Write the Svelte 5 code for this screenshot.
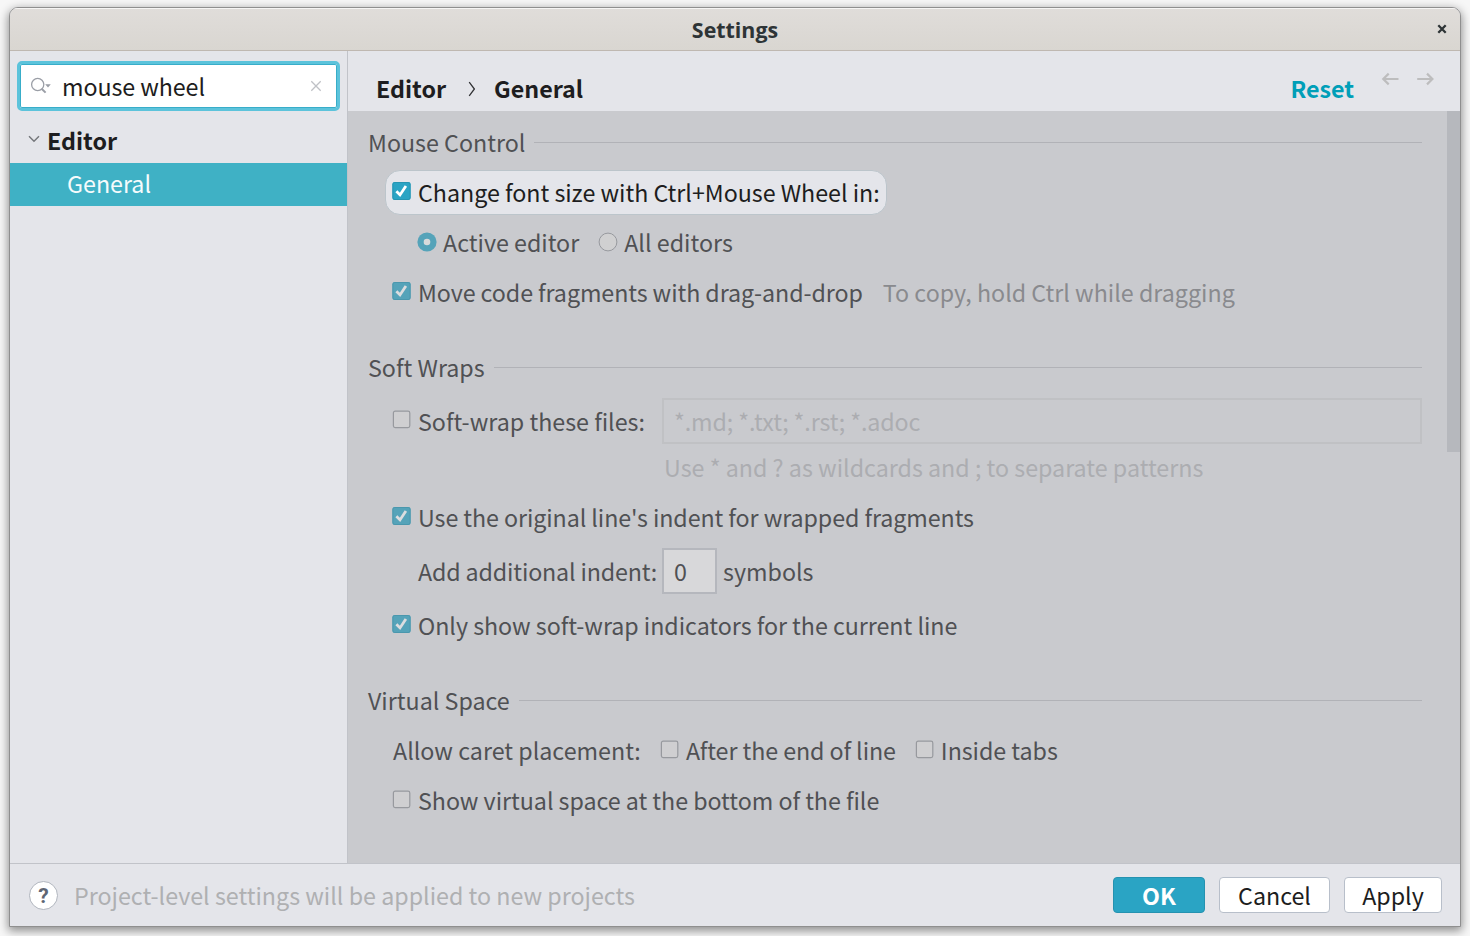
<script>
  let query = $state('mouse wheel');
  const softWrapFiles = '*.md; *.txt; *.rst; *.adoc';
</script>

{#snippet check(on, active = false)}
  <svg class="check" class:active width="20" height="20" viewBox="0 0 20 20">
    {#if on}
      <rect class="fill" x="1.4" y="1" width="18.2" height="18" rx="2.2" />
      <rect class="edge" x="1.9" y="1.5" width="17.2" height="17" rx="1.8" />
      <path class="tick" d="M5.4 10.2 9 13.9 14.9 5" />
    {:else}
      <rect class="empty" x="2.4" y="2.2" width="16.4" height="16.4" rx="1.8" />
    {/if}
  </svg>
{/snippet}

{#snippet radio(on)}
  <svg class="radio" width="20" height="20" viewBox="0 0 20 20">
    {#if on}
      <circle cx="10" cy="10" r="9.6" fill="#55a3b9" />
      <circle cx="10" cy="10" r="3.3" fill="#d9dadb" />
    {:else}
      <circle cx="10" cy="10" r="8.9" fill="#d0d0d1" stroke="#97999e" stroke-width="1" />
    {/if}
  </svg>
{/snippet}

<div class="desktop">
  <div class="window">
    <header class="titlebar">
      <span class="title">Settings</span>
      <svg class="close" width="10" height="10" viewBox="0 0 10 10">
        <path d="M1.3 1.3 8.7 8.7M8.7 1.3 1.3 8.7" />
      </svg>
    </header>

    <div class="body">
      <aside>
        <div class="search">
          <svg width="22" height="18" viewBox="0 0 22 18">
            <circle cx="7.7" cy="7.5" r="6.1" fill="none" stroke="#9a9ea6" stroke-width="1.3" />
            <path d="M11.6 11.7 15.6 15.6" stroke="#9a9ea6" stroke-width="2" />
            <path d="M15.2 7.3H20.8L18 10.4Z" fill="#9a9ea6" />
          </svg>
          <input bind:value={query} aria-label="Search" />
          <svg width="12" height="12" viewBox="0 0 12 12">
            <path d="M1.3 1.3 10.7 10.7M10.7 1.3 1.3 10.7" stroke="#bfc1c6" stroke-width="1.3" />
          </svg>
        </div>
        <div class="group">
          <svg width="12" height="8" viewBox="0 0 12 8">
            <path d="M1 1.2 6 6.2 11 1.2" fill="none" stroke="#76787c" stroke-width="1.5" />
          </svg>
          <b>Editor</b>
        </div>
        <div class="leaf">General</div>
      </aside>

      <main>
        <div class="crumbs">
          <b class="c1">Editor</b>
          <svg class="sep" width="8" height="16" viewBox="0 0 8 16">
            <path d="M1.2 1.2 6.4 8 1.2 14.8" fill="none" stroke="#303134" stroke-width="1.3" />
          </svg>
          <b class="c2">General</b>
          <b class="reset">Reset</b>
          <svg class="arrow" width="18" height="14" viewBox="0 0 18 14">
            <path d="M17.5 7H2.3M7.7 1.6 2.3 7 7.7 12.4" />
          </svg>
          <svg class="arrow" width="18" height="14" viewBox="0 0 18 14">
            <path d="M1.2 7H16.4M11 1.6 16.4 7 11 12.4" />
          </svg>
        </div>

        <div class="scroll">
          <div class="form">
            <div class="section"><span>Mouse Control</span><hr /></div>
            <div class="row">
              <div class="spot">{@render check(true, true)}<span>Change font size with Ctrl+Mouse Wheel in:</span></div>
            </div>
            <div class="row deep">
              {@render radio(true)}<span class="r1">Active editor</span>
              {@render radio(false)}<span class="r2">All editors</span>
            </div>
            <div class="row">
              {@render check(true)}<span class="lbl tight">Move code fragments with drag-and-drop</span>
              <span class="note">To copy, hold Ctrl while dragging</span>
            </div>

            <div class="section next"><span>Soft Wraps</span><hr /></div>
            <div class="row files">
              {@render check(false)}<span class="lbl fixed">Soft-wrap these files:</span>
              <div class="field"><span>{softWrapFiles}</span></div>
            </div>
            <div class="row hint"><span>Use * and ? as wildcards and ; to separate patterns</span></div>
            <div class="row">
              {@render check(true)}<span class="lbl tight">Use the original line's indent for wrapped fragments</span>
            </div>
            <div class="row indent">
              <span class="fixed">Add additional indent:</span>
              <div class="num"><span>0</span></div>
              <span class="unit">symbols</span>
            </div>
            <div class="row">
              {@render check(true)}<span class="lbl semi">Only show soft-wrap indicators for the current line</span>
            </div>

            <div class="section next"><span>Virtual Space</span><hr /></div>
            <div class="row">
              <span class="caret">Allow caret placement:</span>
              {@render check(false)}<span class="lbl end">After the end of line</span>
              {@render check(false)}<span class="lbl semi">Inside tabs</span>
            </div>
            <div class="row">
              {@render check(false)}<span class="lbl semi">Show virtual space at the bottom of the file</span>
            </div>
          </div>
          <div class="track"><div class="thumb"></div></div>
        </div>
      </main>
    </div>

    <footer>
      <div class="help">?</div>
      <span class="info">Project-level settings will be applied to new projects</span>
      <button class="ok"><span>OK</span></button>
      <button class="cancel"><span>Cancel</span></button>
      <button class="apply"><span>Apply</span></button>
    </footer>
  </div>
</div>

<style>
  :global(body) { margin: 0; overflow: hidden; }
  * { box-sizing: border-box; }
  svg { flex: none; display: block; }
  .desktop {
    width: 1470px; height: 936px; padding: 7px 9px 9px; background: #f7f7f7; overflow: hidden;
    font: 23.25px/30px "Noto Sans CJK SC", "Noto Sans CJK JP", sans-serif; color: #1d1d20; white-space: nowrap;
  }
  .window {
    width: 1452px; height: 920px; display: flex; flex-direction: column; overflow: hidden;
    border: 1px solid #8f8f8f; border-radius: 9px 9px 0 0; background: #e4e5ea;
    box-shadow: 0 3px 10px 1px rgba(0, 0, 0, .42);
  }
  .titlebar {
    height: 43px; flex: none; display: flex; align-items: center; justify-content: center; position: relative;
    background: linear-gradient(#e0ddda, #d9d6d1); border-bottom: 1px solid #bfb8b1; box-shadow: inset 0 1px #f6f5f4;
  }
  .title { font: 700 21.4px/30px "Open Sans", "Noto Sans", sans-serif; color: #2e3436; padding-top: 2px; }
  .close { position: absolute; right: 13px; top: 16px; }
  .close path { stroke: #2e3436; stroke-width: 2.3; }
  .body { height: 812px; flex: none; display: flex; }
  aside { width: 338px; flex: none; border-right: 1px solid #c1c3c9; }
  .search {
    margin: 10px 7px 9px 7px; width: 323px; height: 50px; border: 3px solid #5cc3db; border-radius: 5px;
    box-shadow: inset 0 0 0 1px #38adc9; background: #fff; display: flex; align-items: center; padding: 0 15px 0 10px;
  }
  .search input {
    border: 0; padding: 0; outline: 0; background: none; font: inherit; color: inherit; letter-spacing: -.08px;
    margin-left: 10px; flex: 1; min-width: 0; height: 34px;
  }
  .group { height: 43px; display: flex; align-items: center; padding-left: 18px; }
  .group svg { margin-top: -5px; }
  .group b { margin: -3px 0 0 7px; }
  .leaf { height: 43px; line-height: 40px; padding-left: 57px; background: #3fb1c5; color: #f5fbfc; }
  main { flex: 1; min-width: 0; display: flex; flex-direction: column; }
  .crumbs { height: 60px; flex: none; display: flex; padding: 22px 26px 0 28px; align-items: flex-start; }
  .sep { margin: 8px 18px 0 22px; }
  .reset { margin-left: auto; margin-right: 27px; color: #009fb8; }
  .arrow { margin-top: -1px; }
  .arrow + .arrow { margin-left: 17px; }
  .arrow path { fill: none; stroke: #bdbdbe; stroke-width: 2.2; }
  .scroll { flex: 1; display: flex; background: #c9cace; color: #505154; }
  .form { flex: 1; padding: 7px 25px 0 20px; }
  .form span { padding-bottom: 2px; }
  .track { width: 13px; }
  .thumb { height: 341px; background: #b6b8bd; }
  .section { height: 50px; display: flex; align-items: center; }
  .section.next { margin-top: 25px; }
  hr { flex: 1; border: 0; height: 1px; background: #b1b2b7; margin: 0 0 2px 9px; }
  .row { height: 50px; display: flex; align-items: center; padding-left: 23px; }
  .check { margin-top: -4px; }
  .radio { margin-top: -2px; }
  .fill { fill: #55a3b9; }
  .edge { fill: none; stroke: #4a97ad; }
  .tick { fill: none; stroke: #dcdddf; stroke-width: 2.8; }
  .empty { fill: #cfcfd1; stroke: #97999e; stroke-width: 1.2; }
  .active .fill { fill: #2aa4c4; }
  .active .edge { stroke: #2595b2; }
  .active .tick { stroke: #fff; }
  .lbl, .spot span { margin-left: 7px; }
  .tight { letter-spacing: -.08px; }
  .semi { letter-spacing: -.04px; }
  .spot {
    height: 45px; width: 502px; margin: -1px 0 0 -6px; padding-left: 5px; display: flex; align-items: center;
    border: 1px solid #bcc5cb; border-radius: 15px; background: #e4e5ea; color: #1d1d20;
  }
  .spot .check { margin-top: -3px; }
  .spot span { padding-bottom: 1px; letter-spacing: -.02px; }
  .deep { padding-left: 49px; }
  .r1 { margin: 0 19px 0 6px; }
  .r2 { margin-left: 6px; }
  .note { margin-left: 20px; color: #898a8e; }
  .row.files { height: 56px; }
  .files .lbl.fixed { width: 244px; padding-bottom: 0; }
  .field {
    flex: 1; height: 46px; border: 2px solid #c0c1c4; padding: 0 10px; display: flex; align-items: center; color: #acadb1;
  }
  .field span { padding-bottom: 0; letter-spacing: -.12px; }
  .row.hint { height: 44px; padding: 0 0 6px 296px; color: #acadb1; }
  .row.indent { height: 58px; padding-left: 50px; }
  .indent .fixed { width: 244px; letter-spacing: -.15px; }
  .num {
    width: 55px; height: 46px; margin-top: -2px; border: 2px solid #b5b7bd; background: #d8d8da; display: flex; align-items: center; padding-left: 10px;
  }
  .num span { padding-bottom: 0; }
  .unit { margin-left: 6px; }
  .caret { width: 267px; margin-left: 2px; }
  .caret + .check { margin-left: -1px; }
  .end { margin-right: 18px; letter-spacing: -.08px; }
  footer { flex: 1; border-top: 1px solid #c1c3c9; display: flex; align-items: center; padding: 1px 18px 0 19px; }
  .help {
    width: 29px; height: 29px; margin-top: -1px; border: 1px solid #b0b5be; border-radius: 50%; background: #fff; color: #5f6673;
    font: 700 21px/28px Roboto, sans-serif; text-align: center;
  }
  .info { margin: -2px auto 0 16px; color: #afb0b2; }
  button {
    height: 36px; margin: -2px 0 0 14px; padding: 0; border: 1px solid #b8bfca; border-radius: 4px; background: #fff;
    font: inherit; color: inherit; display: flex; align-items: center; justify-content: center;
  }
  .ok { width: 92px; background: #2aa4c4; border: 1px solid #2592b0; color: #fff; font-weight: 700; }
  .cancel { width: 111px; }
  .apply { width: 98px; }
</style>
